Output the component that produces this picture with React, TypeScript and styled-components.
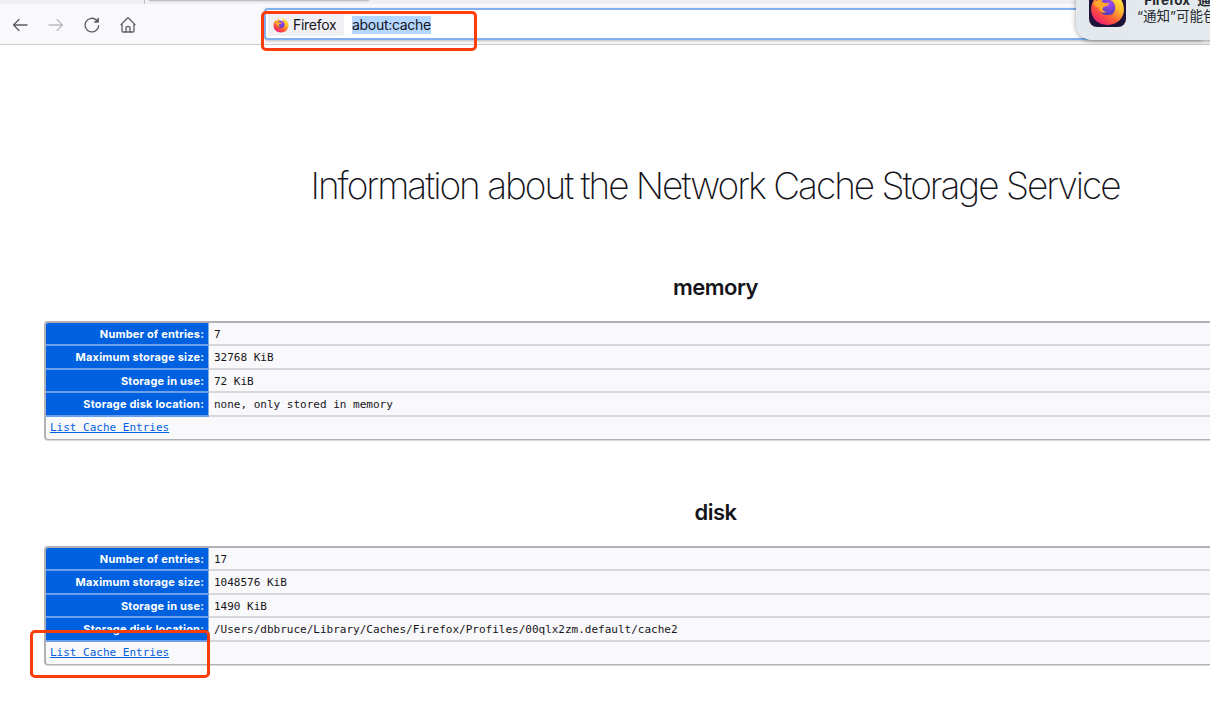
import React from 'react';
import styled, { createGlobalStyle } from 'styled-components';

const GlobalStyle = createGlobalStyle`
  * { box-sizing: border-box; }
  html, body { margin: 0; height: 722px; overflow: hidden; background: #fff; }
  body { font-family: Inter, "Noto Sans CJK SC", sans-serif; color: #15141a; }
`;

const Window = styled.div`
  position: relative;
  width: 1210px;
  height: 722px;
  overflow: hidden;
`;

const TabStrip = styled.div`
  display: flex;
  height: 4px;
  background: #f0f0f4;
`;

const TabDivider = styled.div`
  width: 1px;
  height: 4px;
  margin-left: 144px;
  background: #c0c0c4;
`;

const TabEdge = styled.div`
  width: 220px;
  height: 1px;
  margin-left: 4px;
  border-radius: 0 0 4px 4px;
  background: #bebec0;
  box-shadow: 0 0 2px #aaa;
`;

const Toolbar = styled.header`
  display: flex;
  height: 41px;
  padding-left: 12px;
  background: #f9f9fb;
  border-bottom: 1px solid #ccccce;
`;

const NavButtons = styled.nav`
  display: flex;
  flex: none;
  gap: 20px;
  width: 252px;
  padding-top: 13px;
`;

const NavIcon = styled.svg<{ $dim?: boolean }>`
  width: 16px;
  height: 16px;
  fill: none;
  stroke: ${p => (p.$dim ? '#bdbdc1' : '#5b5b66')};
  stroke-width: 1.3;
  stroke-linecap: round;
  stroke-linejoin: round;
`;

const UrlBar = styled.div`
  display: flex;
  align-items: center;
  flex: none;
  width: 940px;
  height: 32px;
  margin-top: 4px;
  padding-left: 2px;
  background: #fff;
  border: 2px solid #80aeee;
  border-radius: 4px;
  box-shadow: 0 1px 3px rgba(0, 0, 0, 0.25);
  font-size: 14px;
  line-height: 18px;
`;

const Identity = styled.div`
  display: flex;
  align-items: center;
  gap: 4px;
  width: 76px;
  height: 24px;
  padding: 2px 0 0 5px;
  background: #f0f0f4;
  border-radius: 2px;
  letter-spacing: -0.3px;
  white-space: nowrap;
`;

const UrlText = styled.span`
  margin: 1px 0 0 8px;
  background: #b3d7ff;
  letter-spacing: -0.3px;
`;

const Page = styled.main`
  width: 1342px;
  margin: 121px 0 0 44px;
`;

const Title = styled.h1`
  margin: 0;
  height: 40px;
  text-align: center;
  font-size: 37px;
  line-height: 40px;
  font-weight: 200;
  letter-spacing: -2.02px;
  white-space: nowrap;
`;

const SectionTitle = styled.h2<{ $top: number }>`
  margin: ${p => p.$top}px 0 19px;
  height: 30px;
  padding-left: 1px;
  text-align: center;
  font-size: 22px;
  line-height: 30px;
  font-weight: 600;
  letter-spacing: -0.5px;
`;

const Table = styled.div`
  display: grid;
  grid-template-rows: 23px 24px 23px 24px 22px;
  height: 119px;
  overflow: hidden;
  background: #f9f9fb;
  border: 1px solid #b1b1b5;
  border-top-width: 2px;
  border-left-width: 2px;
  border-radius: 4px;
  box-shadow: 0 1px 0 #d9d9dc;
`;

const Row = styled.div`
  display: grid;
  grid-template-columns: 163px 1fr;
  grid-template-rows: minmax(0, 1fr);
  min-height: 0;
  border-bottom: 2px solid #d8d8dc;
`;

const Label = styled.div`
  margin-bottom: -2px;
  padding-right: 4px;
  background: #0061e0;
  border-bottom: 2px solid #6ba1ea;
  border-right: 1px solid #7faeed;
  color: #fff;
  text-align: right;
  font-size: 11px;
  line-height: 22px;
  font-weight: 700;
  letter-spacing: 0.18px;
  white-space: nowrap;
`;

const Value = styled.div`
  padding-left: 5px;
  font-family: "DejaVu Sans Mono", monospace;
  font-size: 11px;
  line-height: 23px;
  white-space: nowrap;
`;

const LinkRow = styled.div`
  display: flex;
  padding-left: 4px;
`;

const Link = styled.a`
  color: #0061e0;
  font-family: "DejaVu Sans Mono", monospace;
  font-size: 11px;
  line-height: 21px;
  text-decoration: underline;
`;

const Highlight = styled.div<{ $x: number; $y: number; $w: number; $h: number }>`
  position: absolute;
  left: ${p => p.$x}px;
  top: ${p => p.$y}px;
  width: ${p => p.$w}px;
  height: ${p => p.$h}px;
  border: 3px solid #fb3d0c;
  border-radius: 5px;
`;

const Notification = styled.aside`
  position: absolute;
  left: 1076px;
  top: -36px;
  display: flex;
  gap: 11px;
  width: 350px;
  height: 76px;
  padding: 26px 0 0 13px;
  border-radius: 16px;
  background: linear-gradient(100deg, #e3e8ed, #e8eef1);
  box-shadow: 0 1px 5px rgba(0, 0, 0, 0.4);
`;

const NoticeText = styled.div`
  padding-top: 2px;
  font-size: 13.5px;
  line-height: 16px;
  white-space: nowrap;
  color: #252a2e;
  & > strong { display: block; font-size: 13.5px; font-weight: 700; }
`;

const Fox = ({ size, id }: { size: number; id: string }) => (
  <svg width={size} height={size} viewBox="0 0 32 32">
    <defs>
      <linearGradient id={id + 'f'} x1="0.85" y1="0.05" x2="0.2" y2="0.95">
        <stop offset="0" stopColor="#fff04a" />
        <stop offset="0.35" stopColor="#ffbd2e" />
        <stop offset="0.66" stopColor="#ff5f35" />
        <stop offset="1" stopColor="#ee1a72" />
      </linearGradient>
      <radialGradient id={id + 'p'} cx="0.6" cy="0.3" r="0.75">
        <stop offset="0" stopColor="#a74cf2" />
        <stop offset="1" stopColor="#4c3bb8" />
      </radialGradient>
    </defs>
    <path fill={`url(#${id}f)`} d="M19 1c4 2 5 5 6 7 1-1 1-2 1-3 3 3 5 7 5 12 0 8-6 14-15 14S1 25 1 17c0-5 2-8 4-11l1 3c2-3 4-5 6-6 0 2 0 3 1 4l6 1c1-2 1-4 0-7z" />
    <path fill={`url(#${id}p)`} d="M12 8c6-2 11 2 11 7 0 5-3 7-7 7s-7-2-7-7c0-3 1-5 3-7z" />
    <path fill="#ffa52e" d="M3 11c3-3 7-2 10 0h4c1 2-3 3-5 4-1 2 0 4 3 4-3 2-7 0-7-4-2 0-4-1-5-4z" />
  </svg>
);

const AppIcon = styled.div`
  display: flex;
  align-items: center;
  justify-content: center;
  flex: none;
  width: 37px;
  height: 37px;
  border-radius: 8px;
  background: #20123a;
`;

type CacheProps = { entries: string; max: string; used: string; location: string };

const CacheTable = ({ entries, max, used, location }: CacheProps) => (
  <Table>
    <Row><Label>Number of entries:</Label><Value>{entries}</Value></Row>
    <Row><Label>Maximum storage size:</Label><Value>{max}</Value></Row>
    <Row><Label>Storage in use:</Label><Value>{used}</Value></Row>
    <Row><Label>Storage disk location:</Label><Value>{location}</Value></Row>
    <LinkRow><Link>List Cache Entries</Link></LinkRow>
  </Table>
);

export default function App() {
  return (
    <Window>
      <GlobalStyle />
      <TabStrip><TabDivider /><TabEdge /></TabStrip>
      <Toolbar>
        <NavButtons>
          <NavIcon viewBox="0 0 16 16"><path d="M15 8H1.5M7 2.5 1.5 8 7 13.5" /></NavIcon>
          <NavIcon viewBox="0 0 16 16" $dim><path d="M1 8h13.5M9 2.5 14.5 8 9 13.5" /></NavIcon>
          <NavIcon viewBox="0 0 16 16">
            <path d="M14.7 8.6A6.8 6.8 0 1 1 12.6 3.1" />
            <path d="M14.5 1.3v4h-4z" fill="#5b5b66" strokeWidth="0.8" />
          </NavIcon>
          <NavIcon viewBox="0 0 16 16">
            <path d="M1 7.6 7.2 1.3q.8-.7 1.6 0L15 7.6M2 6.7v7q0 1.3 1.3 1.3h9.4q1.3 0 1.3-1.3v-7M6 15v-4q0-1.6 2-1.6t2 1.6v4" />
          </NavIcon>
        </NavButtons>
        <UrlBar>
          <Identity><Fox size={16} id="s" />Firefox</Identity>
          <UrlText>about:cache</UrlText>
        </UrlBar>
      </Toolbar>
      <Page>
        <Title>Information about the Network Cache Storage Service</Title>
        <SectionTitle $top={66}>memory</SectionTitle>
        <CacheTable entries="7" max="32768 KiB" used="72 KiB" location="none, only stored in memory" />
        <SectionTitle $top={57}>disk</SectionTitle>
        <CacheTable
          entries="17"
          max="1048576 KiB"
          used="1490 KiB"
          location="/Users/dbbruce/Library/Caches/Firefox/Profiles/00qlx2zm.default/cache2"
        />
      </Page>
      <Highlight $x={261} $y={11} $w={216} $h={40} />
      <Highlight $x={30} $y={630} $w={180} $h={48} />
      <Notification>
        <AppIcon><Fox size={35} id="b" /></AppIcon>
        <NoticeText>
          <strong>“Firefox”通知</strong>
          “通知”可能包
        </NoticeText>
      </Notification>
    </Window>
  );
}
